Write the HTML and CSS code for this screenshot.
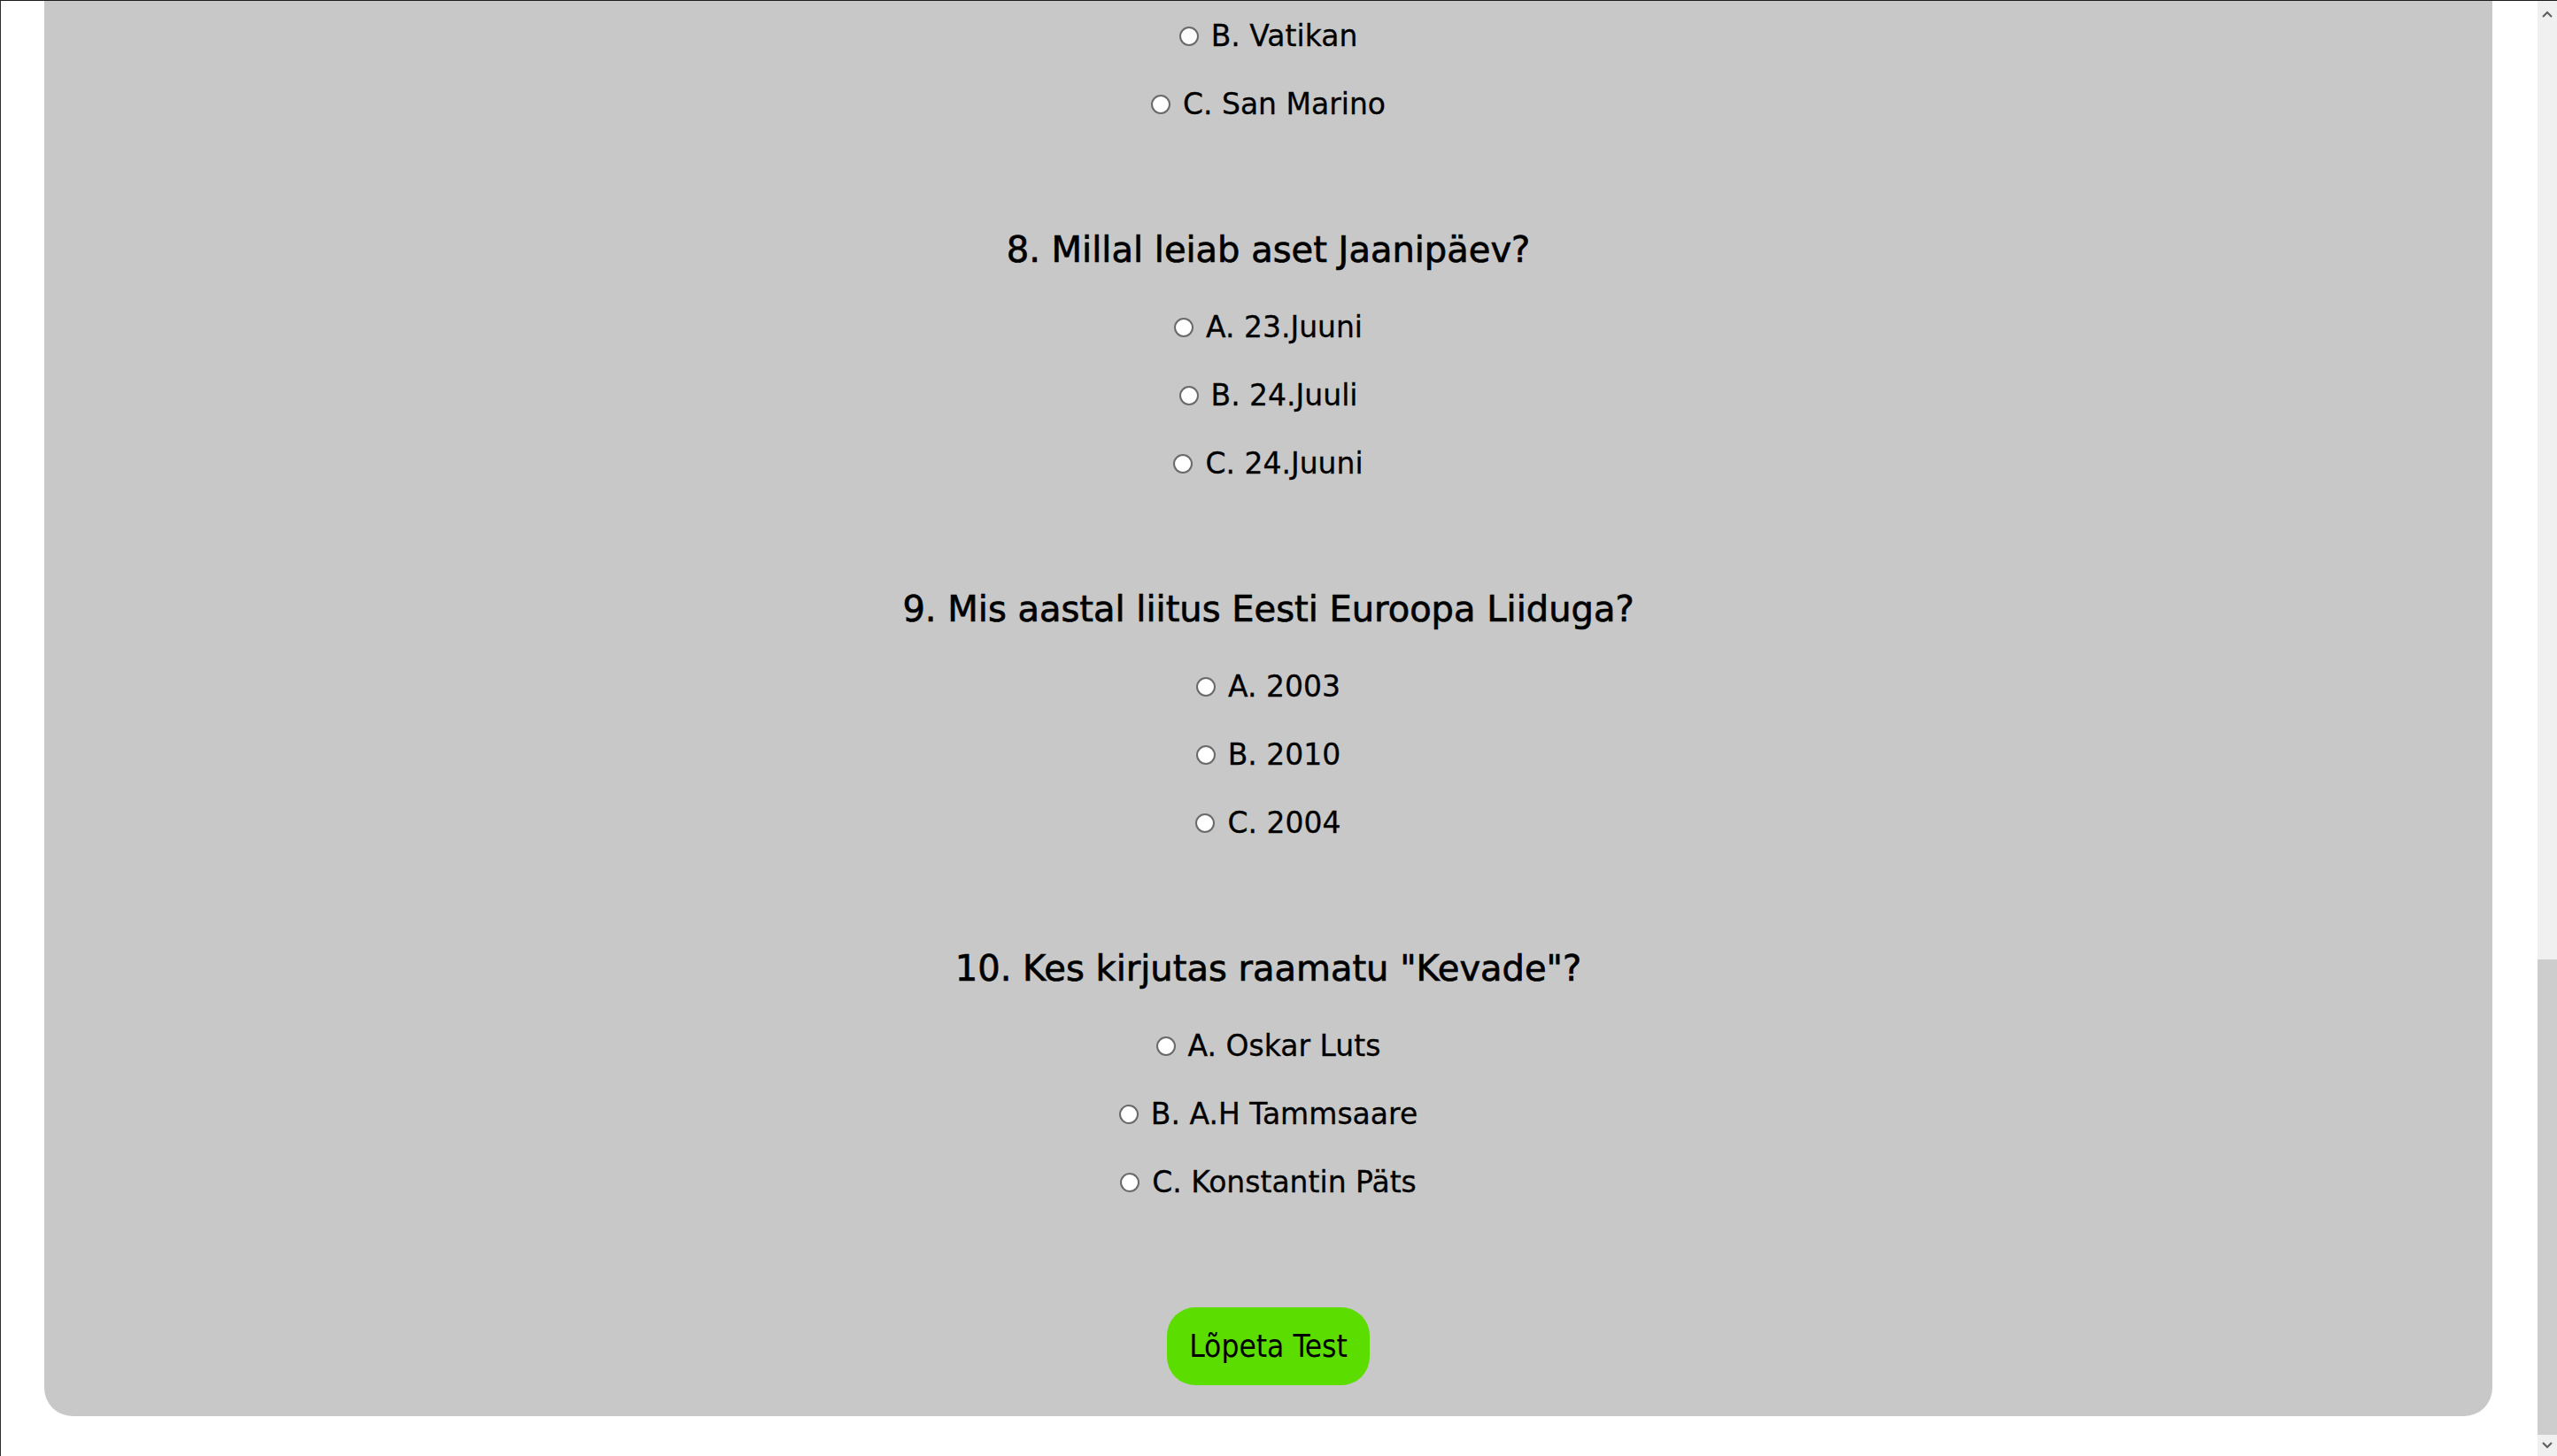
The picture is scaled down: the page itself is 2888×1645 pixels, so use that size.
FILE: index.html
```html
<!DOCTYPE html>
<html lang="et">
<head>
<meta charset="utf-8">
<title>Test</title>
<link rel="stylesheet" href="styles.css">
</head>
<body>
<div class="screen">
  <div class="viewport">
    <main class="card">
      <div class="options">
        <label class="option"><input type="radio" name="q7"><span>B. Vatikan</span></label>
        <label class="option"><input type="radio" name="q7"><span>C. San Marino</span></label>
      </div>

      <section class="question">
        <h2>8. Millal leiab aset Jaanipäev?</h2>
        <div class="options">
          <label class="option"><input type="radio" name="q8"><span>A. 23.Juuni</span></label>
          <label class="option"><input type="radio" name="q8"><span>B. 24.Juuli</span></label>
          <label class="option"><input type="radio" name="q8"><span>C. 24.Juuni</span></label>
        </div>
      </section>

      <section class="question">
        <h2>9. Mis aastal liitus Eesti Euroopa Liiduga?</h2>
        <div class="options">
          <label class="option"><input type="radio" name="q9"><span>A. 2003</span></label>
          <label class="option"><input type="radio" name="q9"><span>B. 2010</span></label>
          <label class="option"><input type="radio" name="q9"><span>C. 2004</span></label>
        </div>
      </section>

      <section class="question">
        <h2>10. Kes kirjutas raamatu "Kevade"?</h2>
        <div class="options">
          <label class="option"><input type="radio" name="q10"><span>A. Oskar Luts</span></label>
          <label class="option"><input type="radio" name="q10"><span>B. A.H Tammsaare</span></label>
          <label class="option"><input type="radio" name="q10"><span>C. Konstantin Päts</span></label>
        </div>
      </section>

      <button class="finish" type="button">Lõpeta Test</button>
    </main>
  </div>
  <div class="scrollbar">
    <div class="arrow arrow-up">
      <svg width="12" height="8" viewBox="0 0 12 8"><path d="M1 7 L6 2 L11 7" fill="none" stroke="#606060" stroke-width="2.2"/></svg>
    </div>
    <div class="track"><div class="thumb"></div></div>
    <div class="arrow arrow-down">
      <svg width="12" height="8" viewBox="0 0 12 8"><path d="M1 1 L6 6 L11 1" fill="none" stroke="#606060" stroke-width="2.2"/></svg>
    </div>
  </div>
</div>
</body>
</html>
```

FILE: styles.css
```css
html, body {
  margin: 0;
  padding: 0;
  overflow: hidden;
  background: #ffffff;
}

.screen {
  display: flex;
  width: 2888px;
  height: 1645px;
  box-sizing: border-box;
  border-top: 1px solid #1c1c1c;
  border-left: 1px solid #2e2e2e;
}

.viewport {
  flex: 1;
  display: flex;
  flex-direction: column;
  background: #ffffff;
}

.card {
  margin: 0 51px 45px 49px;
  padding: 1px 0 35px;
  background: #c8c8c8;
  border-radius: 0 0 32px 32px;
  display: flex;
  flex-direction: column;
  align-items: center;
  font-family: "DejaVu Sans", Verdana, sans-serif;
  color: #000000;
}

.options {
  display: flex;
  flex-direction: column;
  align-items: center;
}

.option {
  height: 77px;
  display: flex;
  align-items: center;
  gap: 14px;
  font-size: 33px;
  -webkit-text-stroke: 0.3px #000000;
}

.option input {
  appearance: none;
  -webkit-appearance: none;
  width: 22px;
  height: 22px;
  margin: 0;
  border-radius: 50%;
  border: 2px solid #6a6a6a;
  background: radial-gradient(circle, #ffffff 60%, #f2f2f2 100%);
  box-sizing: border-box;
}

.question {
  margin-top: 102px;
  display: flex;
  flex-direction: column;
  align-items: center;
}

.question h2 {
  margin: 0 0 25px;
  font-size: 40px;
  line-height: 48px;
  font-weight: normal;
  -webkit-text-stroke: 0.7px #000000;
}

.finish {
  margin-top: 103px;
  width: 229px;
  height: 88px;
  padding: 0;
  border: none;
  border-radius: 32px;
  background: #5cdd00;
  color: #000000;
  font-family: "DejaVu Sans Condensed", "DejaVu Sans", sans-serif;
  font-stretch: condensed;
  font-size: 35px;
}

.scrollbar {
  width: 22px;
  display: flex;
  flex-direction: column;
  background: #f0f0f0;
}

.arrow {
  display: flex;
  align-items: center;
  justify-content: center;
}

.arrow-up {
  height: 30px;
}

.arrow-down {
  height: 24px;
}

.track {
  flex: 1;
  display: flex;
  flex-direction: column;
  justify-content: flex-end;
}

.thumb {
  height: 537px;
  background: #cdcdcd;
}
```
